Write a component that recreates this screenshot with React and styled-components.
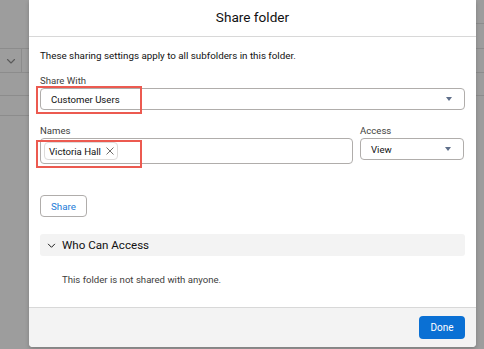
import styled, { createGlobalStyle } from "styled-components";

const GlobalStyle = createGlobalStyle`
  html, body {
    margin: 0;
    padding: 0;
    width: 484px;
    height: 349px;
    overflow: hidden;
    background: #9d9d9d;
    font-family: Roboto, "Liberation Sans", Arial, sans-serif;
    color: #111;
  }
`;

const Backdrop = styled.div`
  position: relative;
  width: 484px;
  height: 349px;
  background: #9d9d9d;
  overflow: hidden;
`;

const PageLeft = styled.div`
  position: absolute;
  left: 0;
  top: 0;
  width: 40px;
  display: flex;
  flex-direction: column;
`;

const PageRight = styled.div`
  position: absolute;
  right: 0;
  top: 0;
  width: 20px;
  display: flex;
  flex-direction: column;
`;

const PageRow = styled.div`
  height: ${(p) => p.$h}px;
  border-bottom: 1px solid #8c8c8c;
  display: flex;
  align-items: center;
  box-sizing: border-box;
  font-size: 11px;
  color: #6e6e6e;
`;

const ChevronCell = styled.div`
  width: 22px;
  height: 100%;
  border-right: 1px solid #8c8c8c;
  display: flex;
  align-items: center;
  justify-content: center;
  box-sizing: border-box;
`;

const Modal = styled.div`
  position: absolute;
  left: 29px;
  top: 0;
  width: 447px;
  height: 347px;
  background: #fff;
  border-radius: 0 0 4px 4px;
  box-shadow: 0 2px 4px rgba(0, 0, 0, 0.2);
  display: flex;
  flex-direction: column;
  overflow: hidden;
`;

const Header = styled.div`
  height: 37px;
  flex: none;
  border-bottom: 1px solid #d8d8d8;
  display: flex;
  align-items: center;
  justify-content: center;
  font-size: 13.6px;
  padding-bottom: 3px;
  box-sizing: border-box;
`;

const Body = styled.div`
  flex: 1;
  padding: 12px 11px 0 11px;
  display: flex;
  flex-direction: column;
`;

const Intro = styled.p`
  margin: 0 0 12px 0;
  font-size: 9.8px;
  line-height: 13px;
`;

const Label = styled.div`
  font-size: 9.6px;
  color: #3e3e3c;
  line-height: 13px;
  margin-bottom: 1px;
`;

const Select = styled.div`
  position: relative;
  height: 22px;
  border: 1px solid #b0adab;
  border-radius: 4px;
  display: flex;
  align-items: center;
  justify-content: space-between;
  padding: 0 12px 0 10px;
  font-size: 9.6px;
  box-sizing: border-box;
`;

const Caret = styled.span`
  width: 0;
  height: 0;
  border-left: 3.5px solid transparent;
  border-right: 3.5px solid transparent;
  border-top: 4.5px solid #5f6f8a;
`;

const Highlight = styled.div`
  position: absolute;
  left: -5px;
  top: ${(p) => p.$t}px;
  width: 106px;
  height: 28px;
  border: 2px solid #ec5a50;
  box-sizing: border-box;
  pointer-events: none;
`;

const Row = styled.div`
  display: flex;
  gap: 7px;
  margin-top: 14px;
`;

const Field = styled.div`
  display: flex;
  flex-direction: column;
  width: ${(p) => p.$w}px;
`;

const NamesBox = styled.div`
  position: relative;
  height: 26px;
  border: 1px solid #b0adab;
  border-radius: 4px;
  display: flex;
  align-items: center;
  padding: 0 3px;
  box-sizing: border-box;
`;

const Pill = styled.div`
  height: 18px;
  border: 1px solid #dddbda;
  border-radius: 4px;
  display: flex;
  align-items: center;
  gap: 5px;
  padding: 0 3px 0 4px;
  font-size: 9.6px;
  box-sizing: border-box;
`;

const ShareButton = styled.button`
  align-self: flex-start;
  margin-top: 31px;
  height: 22px;
  width: 47px;
  border: 1px solid #b0adab;
  border-radius: 4px;
  background: #fff;
  color: #1b7bd8;
  font-family: inherit;
  font-size: 9.8px;
  padding: 0;
`;

const Section = styled.div`
  margin-top: 17px;
  height: 22px;
  background: #f3f3f3;
  border-radius: 3px;
  display: flex;
  align-items: center;
  gap: 6px;
  padding-left: 7px;
  font-size: 11.6px;
`;

const Empty = styled.div`
  margin: 18px 0 0 22px;
  font-size: 9.6px;
  color: #3e3e3c;
`;

const Footer = styled.div`
  height: 40px;
  flex: none;
  background: #f3f3f3;
  border-top: 1px solid #d8d8d8;
  display: flex;
  align-items: center;
  justify-content: flex-end;
  padding-right: 11px;
  box-sizing: border-box;
`;

const DoneButton = styled.button`
  width: 46px;
  height: 23px;
  border: none;
  border-radius: 4px;
  background: #0a70d4;
  color: #fff;
  font-family: inherit;
  font-size: 10px;
  padding: 0;
`;

const Chevron = ({ color = "#181818", size = 10 }) => (
  <svg width={size} height={size} viewBox="0 0 10 10" fill="none">
    <path d="M1.5 3.5 L5 7 L8.5 3.5" stroke={color} strokeWidth="1.1" strokeLinecap="round" strokeLinejoin="round" />
  </svg>
);

const CloseIcon = () => (
  <svg width="8" height="8" viewBox="0 0 8 8" fill="none">
    <path d="M0.8 0.8 L7.2 7.2 M7.2 0.8 L0.8 7.2" stroke="#706e6b" strokeWidth="1" strokeLinecap="round" />
  </svg>
);

export default function App() {
  return (
    <Backdrop>
      <GlobalStyle />
      <PageLeft>
        <PageRow $h={49} />
        <PageRow $h={24}>
          <ChevronCell>
            <Chevron color="#5a5a5a" size={10} />
          </ChevronCell>
        </PageRow>
        <PageRow $h={23} />
        <PageRow $h={20} />
      </PageLeft>
      <PageRight>
        <PageRow $h={24}>er</PageRow>
        <PageRow $h={25} />
        <PageRow $h={24} />
        <PageRow $h={23} />
      </PageRight>
      <Modal>
        <Header>Share folder</Header>
        <Body>
          <Intro>These sharing settings apply to all subfolders in this folder.</Intro>
          <Label>Share With</Label>
          <Select>
            Customer Users
            <Caret />
            <Highlight $t={-3} />
          </Select>
          <Row>
            <Field $w={313}>
              <Label>Names</Label>
              <NamesBox>
                <Pill>
                  Victoria Hall
                  <CloseIcon />
                </Pill>
                <Highlight $t={1} />
              </NamesBox>
            </Field>
            <Field $w={104}>
              <Label>Access</Label>
              <Select>
                View
                <Caret />
              </Select>
            </Field>
          </Row>
          <ShareButton>Share</ShareButton>
          <Section>
            <Chevron size={9} />
            Who Can Access
          </Section>
          <Empty>This folder is not shared with anyone.</Empty>
        </Body>
        <Footer>
          <DoneButton>Done</DoneButton>
        </Footer>
      </Modal>
    </Backdrop>
  );
}
